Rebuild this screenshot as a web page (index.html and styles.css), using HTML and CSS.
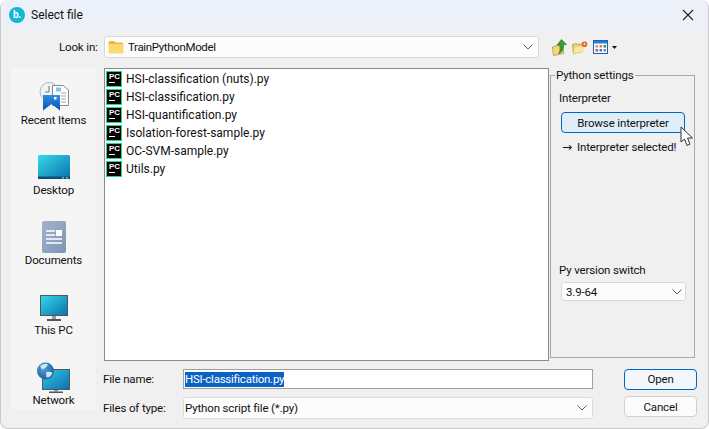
FILE: index.html
```html
<!DOCTYPE html>
<html lang="en">
<head>
<meta charset="utf-8">
<title>Select file</title>
<link rel="stylesheet" href="styles.css">
</head>
<body>
<div class="window">
  <header class="titlebar">
    <div class="app-logo">b.</div>
    <div class="title">Select file</div>
    <svg class="close" width="14" height="14" viewBox="0 0 14 14"><path d="M2 2L12 12M12 2L2 12" stroke="#222" stroke-width="1.1" fill="none"/></svg>
  </header>
  <div class="toolbar">
    <label class="lookin-label">Look in:</label>
    <div class="combo lookin">
      <svg class="folder" width="16" height="14" viewBox="0 0 16 14"><path d="M0.5 2.5Q0.5 1 2 1H6L7.5 2.5H14Q15.5 2.5 15.5 4V4.5H0.5Z" fill="#f2b632"/><path d="M0.5 4.5H15.5V12Q15.5 13.5 14 13.5H2Q0.5 13.5 0.5 12Z" fill="#fcd96e"/></svg>
      <span class="combo-text">TrainPythonModel</span>
      <svg class="chev" width="10" height="6" viewBox="0 0 10 6"><path d="M0.5 0.5L5 5L9.5 0.5" stroke="#606060" fill="none"/></svg>
    </div>
    <div class="tools">
      <svg width="15" height="17" viewBox="0 0 15 17"><path d="M0.5 8L5 6.5L11 6L11.5 14.5L1.5 16.5Z" fill="#f4d67c" stroke="#b4963a" stroke-width=".8"/><path d="M6.5 14.5C8.5 13 8 10 7.8 6H5L9.5 0.5L14.5 5.5H11.5C11.5 10 10.5 13.5 6.5 14.5Z" fill="#39a22f" stroke="#1c6f18" stroke-width=".6"/></svg>
      <svg width="16" height="13" viewBox="0 0 16 13"><path d="M0.5 3.5L5 2.5L6 3.5L11 3L10.5 10.5L1.5 12.5Z" fill="#f0cf70" stroke="#b4963a" stroke-width=".8"/><path d="M2.5 6.5L13 4.5L10.5 10.5L1.5 12.5Z" fill="#fbe89e"/><circle cx="12.5" cy="3.2" r="2.8" fill="#e8602c"/><circle cx="12.5" cy="3.2" r="1.1" fill="#ffd9a0"/></svg>
      <span class="view-btn">
        <svg width="15" height="14" viewBox="0 0 15 14"><rect x=".5" y=".5" width="14" height="13" fill="#fff" stroke="#1d62b8"/><rect x="1" y="1" width="13" height="2.5" fill="#2f7ad0"/><rect x="2.5" y="5" width="2.5" height="2.5" fill="#98a4b4"/><rect x="6.5" y="5" width="2.5" height="2.5" fill="#e07a3a"/><rect x="10.5" y="5" width="2.5" height="2.5" fill="#2b8a5a"/><rect x="2.5" y="9" width="2.5" height="2.5" fill="#d8503a"/><rect x="6.5" y="9" width="2.5" height="2.5" fill="#2f7ad0"/><rect x="10.5" y="9" width="2.5" height="2.5" fill="#8a8a8a"/></svg>
        <svg width="5" height="3" viewBox="0 0 5 3"><path d="M0 0H5L2.5 3Z" fill="#111"/></svg>
      </span>
    </div>
  </div>
  <div class="content">
    <nav class="places">
      <div class="place place-recent">
        <svg width="32" height="29" viewBox="0 0 32 29"><defs><linearGradient id="d0" x1="0" y1="0" x2="0" y2="1"><stop offset="0" stop-color="#2b8fe0"/><stop offset="1" stop-color="#0a55b8"/></linearGradient></defs><circle cx="11" cy="9.5" r="9" fill="#f2f2f2" stroke="#b5b5b5"/><path d="M11 4V10H7" stroke="#777" fill="none"/><path d="M14.5 3.5H25L30.5 8V23.5H14.5Z" fill="#fff" stroke="#8a8a8a"/><path d="M23 11H28M23 14H28M23 17H28M23 20H28" stroke="#a0a8b0"/><rect x="18" y="5.5" width="5" height="4" fill="#7ec6ea"/><path d="M5 13H22V28.5L13.5 22L5 28.5Z" fill="url(#d0)"/><rect x="16" y="15" width="2.5" height="2.5" fill="#fff"/></svg>
        <span>Recent Items</span>
      </div>
      <div class="place place-desktop">
        <svg width="32" height="24" viewBox="0 0 32 24"><defs><linearGradient id="d1" x1="0" y1="0" x2="1" y2="1"><stop offset="0" stop-color="#34dbe8"/><stop offset="1" stop-color="#0b6fb0"/></linearGradient></defs><rect width="32" height="24" rx="1.5" fill="url(#d1)"/><rect y="21.5" width="32" height="2.5" fill="#0c4e74"/><rect x="24" y="22" width="2" height="1.5" fill="#6ab8d8"/><rect x="28" y="22" width="2" height="1.5" fill="#6ab8d8"/></svg>
        <span>Desktop</span>
      </div>
      <div class="place place-docs">
        <svg width="24" height="32" viewBox="0 0 24 32"><defs><linearGradient id="d2" x1="0" y1="0" x2="1" y2="1"><stop offset="0" stop-color="#a3b4ca"/><stop offset="1" stop-color="#7d95b4"/></linearGradient></defs><rect width="24" height="32" rx="2" fill="url(#d2)"/><path d="M4 10H13M4 14H13M4 18H20M4 22H20" stroke="#fff" stroke-width="1.6"/><rect x="14" y="9" width="6" height="6" fill="#fff"/></svg>
        <span>Documents</span>
      </div>
      <div class="place place-pc">
        <svg width="28" height="26" viewBox="0 0 28 26"><defs><linearGradient id="d3" x1="0" y1="0" x2="1" y2="1"><stop offset="0" stop-color="#34dbe8"/><stop offset="1" stop-color="#0b6fb0"/></linearGradient></defs><rect x=".5" y=".5" width="27" height="20" fill="url(#d3)" stroke="#555"/><rect x="12" y="21" width="4" height="3" fill="#999"/><rect x="7" y="24" width="14" height="2" fill="#555"/></svg>
        <span>This PC</span>
      </div>
      <div class="place place-net">
        <svg width="33" height="31" viewBox="0 0 33 31"><defs><linearGradient id="d4" x1="0" y1="0" x2="1" y2="1"><stop offset="0" stop-color="#34c8e8"/><stop offset="1" stop-color="#0b6fb0"/></linearGradient><radialGradient id="d5" cx=".4" cy=".35" r=".7"><stop offset="0" stop-color="#4fa4dc"/><stop offset="1" stop-color="#1a5c96"/></radialGradient></defs><rect x="5.5" y="7.5" width="27" height="20" fill="url(#d4)" stroke="#555"/><rect x="17" y="28" width="4" height="1.5" fill="#999"/><rect x="12" y="29.5" width="14" height="1.5" fill="#555"/><circle cx="8.5" cy="9" r="8.5" fill="url(#d5)"/><path d="M3 4Q8 0.5 11 2.5Q9 6.5 5 7.5ZM9 10Q14 9 15.5 11Q13 16 9.5 15.5Z" fill="#cfe4f3"/></svg>
        <span>Network</span>
      </div>
    </nav>
    <div class="main">
      <div class="upper">
        <ul class="files">
          <li><span class="pc"><b>PC</b><i></i></span>HSI-classification (nuts).py</li>
          <li><span class="pc"><b>PC</b><i></i></span>HSI-classification.py</li>
          <li><span class="pc"><b>PC</b><i></i></span>HSI-quantification.py</li>
          <li><span class="pc"><b>PC</b><i></i></span>Isolation-forest-sample.py</li>
          <li><span class="pc"><b>PC</b><i></i></span>OC-SVM-sample.py</li>
          <li><span class="pc"><b>PC</b><i></i></span>Utils.py</li>
        </ul>
        <fieldset class="settings">
          <legend>Python settings</legend>
          <div class="group-top">
            <div class="lbl">Interpreter</div>
            <div class="browse-wrap">
              <button class="browse">Browse interpreter</button>
              <svg class="cursor" width="14" height="21" viewBox="0 0 14 21"><path d="M1 1V16L4.5 13L7 19.5L10 18.2L7.5 12H12.5Z" fill="#fff" stroke="#333" stroke-width="1"/></svg>
            </div>
            <div class="selected"><span class="arrow">&#8594;</span>Interpreter selected!</div>
          </div>
          <div class="group-bottom">
            <div class="lbl">Py version switch</div>
            <div class="combo version">
              <span class="combo-text">3.9-64</span>
              <svg class="chev" width="10" height="6" viewBox="0 0 10 6"><path d="M0.5 0.5L5 5L9.5 0.5" stroke="#606060" fill="none"/></svg>
            </div>
          </div>
        </fieldset>
      </div>
      <div class="form">
        <label>File name:</label>
        <div class="input"><span class="sel">HSI-classification.py</span></div>
        <button class="btn primary">Open</button>
        <label>Files of type:</label>
        <div class="combo filetype">
          <span class="combo-text">Python script file (*.py)</span>
          <svg class="chev" width="10" height="6" viewBox="0 0 10 6"><path d="M0.5 0.5L5 5L9.5 0.5" stroke="#606060" fill="none"/></svg>
        </div>
        <button class="btn btn-cancel">Cancel</button>
      </div>
    </div>
  </div>
</div>
</body>
</html>
```
FILE: styles.css
```css
* { box-sizing: border-box; }
html, body { margin: 0; padding: 0; background: #fff; }
body { width: 709px; height: 429px; overflow: hidden; font-family: Roboto, sans-serif; font-size: 11.5px; letter-spacing: -0.15px; color: #111; }
.window { width: 709px; height: 429px; background: #f0f0f0; border-radius: 8px; border: 1px solid #c9c9c9; border-top: 0; display: flex; flex-direction: column; overflow: hidden; }
.titlebar { height: 30px; flex: none; background: #ecf1f9; display: flex; align-items: center; padding-left: 8px; padding-right: 13px; }
.app-logo { width: 16px; height: 16px; border-radius: 50%; background: #14b6d8; color: #fff; font-weight: 700; font-size: 10px; line-height: 15px; text-align: center; }
.title { margin-left: 6px; font-size: 12px; letter-spacing: 0; flex: 1; }
.toolbar { display: flex; align-items: center; height: 22px; margin-top: 6px; padding-left: 58px; flex: none; }
.lookin-label { width: 45px; }
.combo { display: flex; align-items: center; background: #fcfcfc; border: 1px solid #d9d9d9; border-radius: 3px; }
.combo-text { flex: 1; white-space: nowrap; }
.chev { flex: none; }
.lookin { width: 435px; height: 22px; padding: 0 5px 0 3px; letter-spacing: -0.35px; }
.folder { margin-right: 4px; flex: none; }
.tools { display: flex; align-items: center; gap: 5px; margin-left: 13px; }
.view-btn { display: flex; align-items: center; gap: 4px; }
.content { display: flex; flex: 1; padding: 10px 12px 9px 10px; min-height: 0; }
.places { width: 85px; margin: 0 8px 10px 0; background: #f5f5f5; display: flex; flex-direction: column; }
.place { display: flex; flex-direction: column; align-items: center; text-align: center; line-height: 15px; }
.place-recent { margin-top: 14px; gap: 2px; }
.place-desktop { margin-top: 27px; gap: 4px; }
.place-docs { margin-top: 23px; gap: 0; }
.place-pc { margin-top: 27px; gap: 2px; }
.place-net { margin-top: 24px; gap: 0; }
.main { flex: 1; display: flex; flex-direction: column; min-width: 0; }
.upper { display: flex; height: 293px; flex: none; }
.files { width: 445px; height: 293px; margin: 0; padding: 1px 0 0 1px; list-style: none; background: #fff; border: 1px solid #8a8a8a; }
.files li { height: 18px; display: flex; align-items: center; gap: 4px; white-space: nowrap; font-size: 12px; letter-spacing: 0; }
.pc { width: 16px; height: 16px; background: #000; border: 1px solid #21d789; display: flex; flex-direction: column; padding: 1px 0 0 2px; color: #fff; flex: none; }
.pc b { font-family: "Liberation Sans", sans-serif; font-size: 8px; line-height: 7px; font-weight: 700; }
.pc i { display: block; width: 6px; height: 1px; background: #fff; margin-top: 2px; }
.settings { margin: 0 0 3px 1px; padding: 0 8px; width: 145px; height: 290px; border: 1px solid #a8a8a8; display: flex; flex-direction: column; }
.settings legend { padding: 0 1px; margin-left: -4px; line-height: 14px; }
.group-top { display: flex; flex-direction: column; flex: none; }
.lbl { line-height: 16px; }
.group-top .lbl { margin-top: 8px; }
.browse-wrap { position: relative; margin-top: 6px; }
.browse { display: block; width: 124px; height: 21px; margin-left: 2px; padding: 0; background: #e0eef9; border: 1px solid #0067c0; border-radius: 4px; font: inherit; letter-spacing: inherit; color: #111; }
.cursor { position: absolute; left: 121px; top: 14px; }
.selected { margin-top: 6px; margin-left: 3px; line-height: 16px; white-space: nowrap; display: flex; align-items: center; }
.arrow { font-family: "DejaVu Sans", sans-serif; font-size: 12px; letter-spacing: 0; margin-right: 5px; }
.group-bottom { margin-top: auto; margin-bottom: 56px; }
.version { width: 125px; height: 19px; margin-top: 4px; padding: 0 3px 0 4px; margin-left: 2px; }
.form { display: grid; grid-template-columns: 79px 410px 73px; grid-template-rows: 20px 22px; row-gap: 8px; margin-top: 8px; align-items: center; justify-content: start; }
.form label { margin-left: -1px; }
.form .btn { margin-left: 31px; width: 73px; }
.input { height: 20px; background: #fff; border: 1px solid #a0a0a0; padding-left: 1px; display: flex; align-items: center; }
.sel { background: #0a62c4; color: #fff; line-height: 15px; letter-spacing: -0.25px; }
.filetype { height: 22px; padding: 0 5px 0 1px; }
.btn { height: 21px; background: #fbfbfb; border: 1px solid #d0d0d0; border-radius: 4px; font: inherit; letter-spacing: inherit; color: #111; padding: 0; }
.primary { background: #f3f7fc; border-color: #0067c0; }
.btn-cancel { align-self: start; margin-top: -1px; }
```
